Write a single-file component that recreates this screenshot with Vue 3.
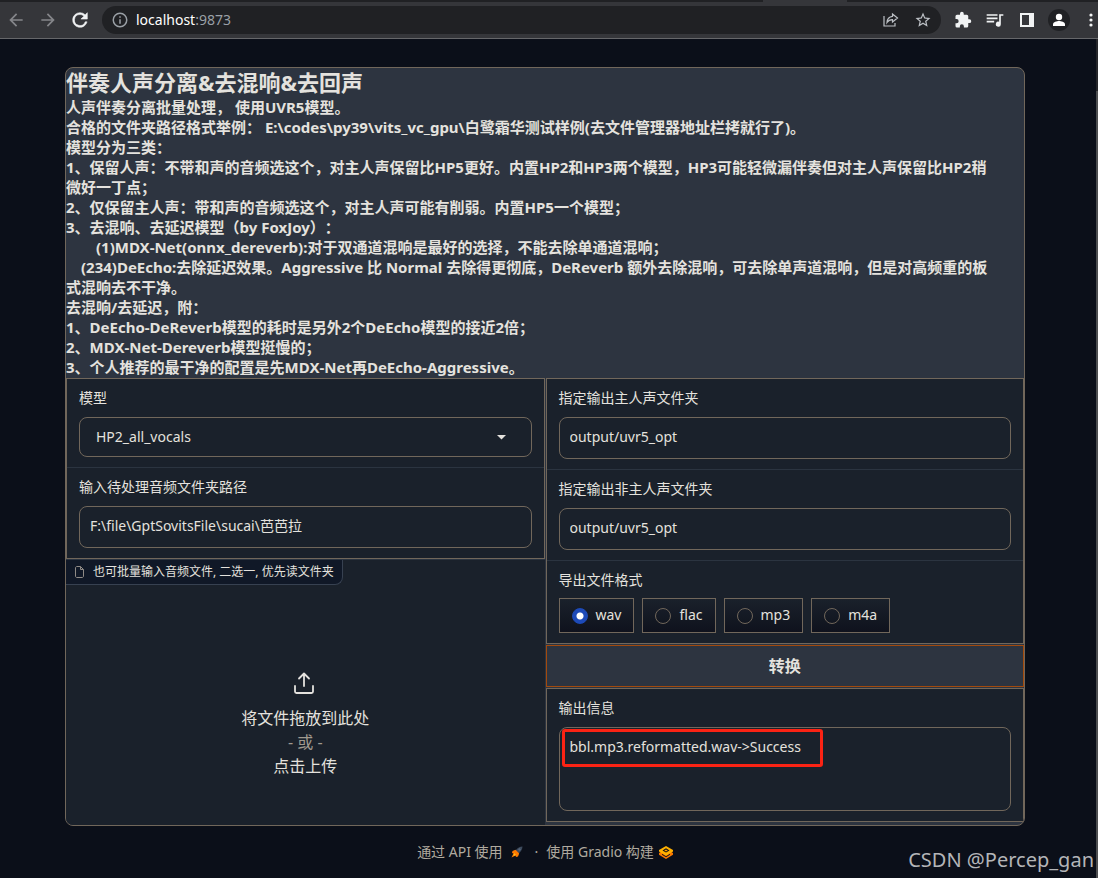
<script setup>
import { ref } from 'vue'

const model = ref('HP2_all_vocals')
const inputPath = ref('F:\\file\\GptSovitsFile\\sucai\\芭芭拉')
const vocalDir = ref('output/uvr5_opt')
const otherDir = ref('output/uvr5_opt')
const formats = ['wav', 'flac', 'mp3', 'm4a']
const format = ref('wav')
const result = ref('bbl.mp3.reformatted.wav->Success')
const address = ref('localhost:9873')
</script>

<template>
  <div class="window">
    <header class="chrome">
      <div class="tabs"><span class="tab"></span></div>
      <div class="toolbar">
        <button class="tool dim" aria-label="后退">
          <svg width="20" height="20" viewBox="0 0 24 24"><path fill="currentColor" d="M20 11H7.83l5.59-5.59L12 4l-8 8 8 8 1.41-1.41L7.83 13H20z" /></svg>
        </button>
        <button class="tool dim" aria-label="前进">
          <svg width="20" height="20" viewBox="0 0 24 24"><path fill="currentColor" d="M12 4l-1.41 1.41L16.17 11H4v2h12.17l-5.58 5.59L12 20l8-8z" /></svg>
        </button>
        <button class="tool" aria-label="重新加载">
          <svg width="22" height="22" viewBox="0 0 24 24"><path fill="currentColor" stroke="currentColor" stroke-width="0.6" d="M17.65 6.35A7.96 7.96 0 0 0 12 4a8 8 0 1 0 7.73 10h-2.08A6 6 0 1 1 12 6c1.66 0 3.14.69 4.22 1.78L13 11h7V4z" /></svg>
        </button>
        <div class="omnibox">
          <svg class="info" width="18" height="18" viewBox="0 0 24 24"><path fill="currentColor" d="M11 7h2v2h-2zm0 4h2v6h-2zm1-9a10 10 0 1 0 0 20 10 10 0 0 0 0-20m0 18a8 8 0 1 1 0-16 8 8 0 0 1 0 16" /></svg>
          <span class="url"><b>{{ address.split(':')[0] }}</b>:{{ address.split(':')[1] }}</span>
          <button class="tool soft" aria-label="分享">
            <svg width="16" height="16" viewBox="0 0 16 16" fill="none" stroke="currentColor" stroke-width="1.2"><path d="M1 4v10h11v-3M9.500 2l5 4-5 4V7.600C7 7.600 5.300 8.500 4 10.500 4.200 7 6 4.700 9.500 4.300z" /></svg>
          </button>
          <button class="tool soft" aria-label="收藏">
            <svg width="18" height="18" viewBox="0 0 24 24"><path fill="currentColor" d="m22 9.240-7.190-.62L12 2 9.190 8.630 2 9.240l5.460 4.730L5.820 21 12 17.270 18.180 21l-1.630-7.030zM12 15.400l-3.760 2.270 1-4.280-3.320-2.880 4.380-.38L12 6.100l1.710 4.040 4.380.38-3.320 2.880 1 4.280z" /></svg>
          </button>
        </div>
        <button class="tool" aria-label="扩展程序">
          <svg width="18" height="18" viewBox="0 0 24 24"><path fill="currentColor" d="M20.500 11H19V7a2 2 0 0 0-2-2h-4V3.500a2.500 2.500 0 0 0-5 0V5H4a2 2 0 0 0-2 2v3.800h1.500a2.700 2.700 0 0 1 0 5.400H2V20a2 2 0 0 0 2 2h3.800v-1.500a2.700 2.700 0 0 1 5.400 0V22H17a2 2 0 0 0 2-2v-4h1.500a2.500 2.500 0 0 0 0-5" /></svg>
        </button>
        <button class="tool" aria-label="媒体控制">
          <svg width="20" height="20" viewBox="0 0 24 24"><path fill="currentColor" d="M15 5H2v2h13zm0 4H2v2h13zM2 15h9v-2H2zM17 5v9.180A3 3 0 1 0 19 17V7h3V5z" /></svg>
        </button>
        <button class="tool" aria-label="侧边栏">
          <svg width="14" height="14" viewBox="0 0 14 14"><path fill="currentColor" fill-rule="evenodd" d="M0 0h14v14H0zM2 2v10h7V2z" /></svg>
        </button>
        <button class="tool" aria-label="用户">
          <svg width="22" height="22" viewBox="0 0 22 22"><circle cx="11" cy="11" r="11" fill="#202124" /><circle cx="11" cy="8" r="3.200" fill="#fff" /><path fill="#fff" d="M5 17v-1.800c0-2.200 4-3.200 6-3.200s6 1 6 3.200V17z" /></svg>
        </button>
        <button class="tool more" aria-label="菜单">
          <svg width="4" height="14" viewBox="0 0 4 14" fill="currentColor"><circle cx="2" cy="2" r="1.600" /><circle cx="2" cy="7" r="1.600" /><circle cx="2" cy="12" r="1.600" /></svg>
        </button>
      </div>
    </header>

    <div class="page">
      <main class="panel">
        <section class="intro">
          <h1>伴奏人声分离&amp;去混响&amp;去回声</h1>
          <p>
            人声伴奏分离批量处理， 使用UVR5模型。<br>
            合格的文件夹路径格式举例： E:\codes\py39\vits_vc_gpu\白鹭霜华测试样例(去文件管理器地址栏拷就行了)。<br>
            模型分为三类：<br>
            1、保留人声：不带和声的音频选这个，对主人声保留比HP5更好。内置HP2和HP3两个模型，HP3可能轻微漏伴奏但对主人声保留比HP2稍<br>
            微好一丁点；<br>
            2、仅保留主人声：带和声的音频选这个，对主人声可能有削弱。内置HP5一个模型；<br>
            3、去混响、去延迟模型（by FoxJoy）：<br>
            &emsp;&emsp;(1)MDX-Net(onnx_dereverb):对于双通道混响是最好的选择，不能去除单通道混响；<br>
            &emsp;(234)DeEcho:去除延迟效果。Aggressive 比 Normal 去除得更彻底，DeReverb 额外去除混响，可去除单声道混响，但是对高频重的板<br>
            式混响去不干净。<br>
            去混响/去延迟，附：<br>
            1、DeEcho-DeReverb模型的耗时是另外2个DeEcho模型的接近2倍；<br>
            2、MDX-Net-Dereverb模型挺慢的；<br>
            3、个人推荐的最干净的配置是先MDX-Net再DeEcho-Aggressive。
          </p>
        </section>

        <div class="columns">
          <div class="column left">
            <div class="form">
              <div class="block">
                <label for="model">模型</label>
                <div class="dropdown">
                  <select id="model" v-model="model">
                    <option>HP2_all_vocals</option>
                  </select>
                  <svg class="caret" width="9" height="5" viewBox="0 0 9 5"><path fill="currentColor" d="M0 0h9L4.500 4.500z" /></svg>
                </div>
              </div>
              <div class="block">
                <label for="input-path">输入待处理音频文件夹路径</label>
                <input id="input-path" v-model="inputPath" class="field" type="text">
              </div>
            </div>
            <div class="upload">
              <div class="upload-tag">
                <svg width="11" height="12" viewBox="0 0 11 12" fill="none" stroke="currentColor" stroke-linejoin="round"><path d="M1.500 2c0-.8.500-1.500 1.300-1.500H6.500l3 3V10c0 .9-.5 1.500-1.300 1.500H2.800c-.8 0-1.300-.6-1.300-1.500zM6.500.5v3h3" /></svg>
                也可批量输入音频文件, 二选一, 优先读文件夹
              </div>
              <button class="drop">
                <svg width="22" height="24" viewBox="0 0 22 24" fill="none" stroke="currentColor" stroke-width="1.800" stroke-linecap="round" stroke-linejoin="round"><path d="M1 15v5.500c0 .9.600 1.500 1.500 1.500h15c.9 0 1.500-.6 1.500-1.500V15M10 15V2.500M5 7.500l5-5 5 5" /></svg>
                <span>将文件拖放到此处</span>
                <span class="or">- 或 -</span>
                <span>点击上传</span>
              </button>
            </div>
          </div>

          <div class="column right">
            <div class="form">
              <div class="block">
                <label for="vocal-dir">指定输出主人声文件夹</label>
                <input id="vocal-dir" v-model="vocalDir" class="field" type="text">
              </div>
              <div class="block">
                <label for="other-dir">指定输出非主人声文件夹</label>
                <input id="other-dir" v-model="otherDir" class="field" type="text">
              </div>
              <fieldset class="block">
                <legend>导出文件格式</legend>
                <div class="radios">
                  <label v-for="f in formats" :key="f" class="radio">
                    <input v-model="format" type="radio" name="format" :value="f">
                    <span>{{ f }}</span>
                  </label>
                </div>
              </fieldset>
            </div>
            <button class="convert">转换</button>
            <div class="form">
              <div class="block">
                <label for="result">输出信息</label>
                <div class="result">
                  <textarea id="result" v-model="result" class="field"></textarea>
                  <span class="mark"></span>
                </div>
              </div>
            </div>
          </div>
        </div>
      </main>

      <footer class="footer">
        <a href="#api">通过 API 使用
          <svg class="rocket" width="12" height="12" viewBox="0 0 12 12"><path fill="#3d4a5c" d="M11.500.5C9 .5 6.500 2 4.500 4.500l3 3C10 5.500 11.500 3 11.500.5" /><path fill="#55647a" d="M7 3.500 8.500 5 10 3.500 8.500 2z" /><path fill="#ff7a00" d="M4.500 3.800 1.500 5l-.5 2 1.500.500L.5 11.500l4-2L5 11l2-.500 1.200-3z" /><path fill="#ffc21a" d="M3 7l2 2-2.500 1z" /></svg>
        </a>
        <span class="sep">·</span>
        <a href="#gradio">使用 Gradio 构建
          <svg class="logo" width="14" height="13" viewBox="0 0 14 13"><path fill="#f97700" d="M7 2.800 14 7v1.800L7 13 0 8.800V7z" /><path fill="#ffb000" d="M7 0l7 4v1.500L7 9.700 0 5.500V4z" /><path fill="#0b0f19" d="M7 2.300 10.500 4.500 7 6.600 3.500 4.500zM3 7.800l4 2.400 4-2.400v1L7 11.200 3 8.800z" /><path fill="#ff9d00" d="M7 3.500 8.800 4.500 7 5.600 5.200 4.500z" /></svg>
        </a>
      </footer>
      <div class="scrollbar"></div>
    </div>
    <div class="watermark">CSDN @Percep_gan</div>
  </div>
</template>

<style>
html,
body {
  background: #0b0f19;
}
</style>

<style scoped>
.window {
  --line: #71675b;
  --fill: #1a212b;
  --raised: #2d3440;
  --text: #e4e2de;
  position: relative;
  min-height: 100vh;
  display: flex;
  flex-direction: column;
  overflow: hidden;
  color: var(--text);
  font-family: "Noto Sans", "Noto Sans CJK SC", sans-serif;
  font-size: 14px;
  line-height: 20px;
}
.window * {
  box-sizing: border-box;
}
button,
input,
select,
textarea {
  margin: 0;
  border: 0;
  padding: 0;
  background: none;
  color: inherit;
  font: inherit;
  outline: none;
}

/* browser chrome */
.chrome {
  background: #35363a;
  border-bottom: 1px solid #66676a;
}
.tabs {
  height: 2px;
  display: flex;
  justify-content: flex-end;
  background: #202124;
}
.tab {
  width: 84px;
  margin-right: 251px;
  background: #35363a;
}
.toolbar {
  height: 36px;
  display: flex;
  align-items: center;
}
.tool {
  flex: none;
  width: 32px;
  height: 28px;
  display: flex;
  align-items: center;
  justify-content: center;
  color: #f1f3f4;
}
.dim {
  color: #85868a;
}
.soft {
  color: #bdc1c6;
}
.more {
  width: 23px;
  padding-left: 8px;
}
.omnibox {
  flex: 1;
  min-width: 0;
  height: 28px;
  margin: 0 6px;
  padding: 0 2px 0 9px;
  display: flex;
  align-items: center;
  border-radius: 14px;
  background: #202124;
}
.info {
  color: #9aa0a6;
}
.url {
  flex: 1;
  margin-left: 7px;
  color: #9aa0a6;
}
.url b {
  color: #fff;
  font-weight: 400;
}

/* page */
.page {
  position: relative;
  flex: 1;
  padding: 28px 73px 0 65px;
  background: #0b0f19;
}
.panel {
  overflow: hidden;
  border: 1px solid var(--line);
  border-radius: 8px;
  background: var(--raised);
}
.intro {
  padding-bottom: 1px;
  white-space: nowrap;
  font-weight: 700;
  text-spacing-trim: space-all;
}
.intro h1 {
  margin: 0 0 1px;
  font-size: 22px;
  line-height: 28px;
}
.intro p {
  margin: 0;
  font-size: 15px;
  line-height: 20px;
}
.columns {
  display: grid;
  grid-template-columns: 1fr 1fr;
  column-gap: 1px;
}
.column {
  min-width: 0;
  display: flex;
  flex-direction: column;
}
.right {
  gap: 1px;
  padding-bottom: 3px;
}
.form {
  border: 1px solid var(--line);
  background: var(--fill);
}
.block {
  margin: 0;
  border: 0;
  padding: 10px 12px;
  min-width: 0;
}
.block + .block {
  border-top: 1px solid #2b3440;
}
.block > label,
legend {
  display: block;
  margin-bottom: 10px;
  padding: 0;
  line-height: 18px;
}
legend {
  float: left;
  width: 100%;
  margin-bottom: 9px;
}
.field {
  display: block;
  width: 100%;
  height: 42px;
  padding: 0 10px 4px;
  border: 1px solid var(--line);
  border-radius: 8px;
}
textarea.field {
  height: 84px;
  padding: 9px 10px;
  resize: none;
}
.dropdown {
  position: relative;
}
select {
  display: block;
  width: 100%;
  height: 40px;
  padding: 0 40px 0 16px;
  border: 1px solid var(--line);
  border-radius: 8px;
  appearance: none;
}
.caret {
  position: absolute;
  right: 26px;
  top: 18px;
}
.radios {
  clear: both;
  display: flex;
  gap: 8px;
}
.radio {
  height: 35px;
  display: flex;
  align-items: center;
  gap: 8px;
  padding: 0 12px;
  border: 1px solid var(--line);
  background: linear-gradient(#1a212b, #0f121d);
}
.radio span {
  padding-bottom: 2px;
}
.radio input {
  appearance: none;
  width: 16px;
  height: 16px;
  border: 1px solid var(--line);
  border-radius: 50%;
}
.radio input:checked {
  border-color: #1d4ab8;
  background: radial-gradient(circle, #fff 3px, #1d4ab8 4px);
}
.convert {
  height: 42px;
  border: 1px solid #a34a0c;
  background: var(--raised);
  font-size: 16px;
  font-weight: 700;
}
.result {
  position: relative;
}
.mark {
  position: absolute;
  left: 3px;
  top: 2px;
  width: 261px;
  height: 38px;
  border: 3px solid #fb2314;
  border-radius: 3px;
}
.upload {
  flex: 1;
  display: flex;
  flex-direction: column;
  align-items: flex-start;
  border-top: 1px solid #2b3440;
  background: var(--fill);
}
.upload-tag {
  display: flex;
  align-items: center;
  gap: 8px;
  height: 25px;
  padding: 0 8px;
  border: solid #374151;
  border-width: 0 1px 1px 0;
  border-radius: 0 0 8px 0;
  background: #101827;
  font-size: 12px;
}
.upload-tag svg {
  color: #8f8a86;
}
.drop {
  flex: 1;
  width: 100%;
  display: flex;
  flex-direction: column;
  align-items: center;
  justify-content: center;
  padding-top: 38px;
  font-size: 16px;
  line-height: 24px;
}
.drop svg {
  margin-bottom: 11px;
}
.or {
  color: #a09a90;
}
.footer {
  display: flex;
  justify-content: center;
  align-items: center;
  margin-top: 16px;
  color: #b0aa9f;
}
.footer a {
  display: flex;
  align-items: center;
  color: inherit;
  text-decoration: none;
}
.rocket {
  margin-left: 8px;
}
.sep {
  margin: 0 8px 0 12px;
}
.logo {
  margin-left: 5px;
}
.scrollbar {
  position: absolute;
  top: 0;
  right: 0;
  bottom: 0;
  width: 2px;
  background: linear-gradient(#25262a 52px, #4d4e50 52px);
}
.watermark {
  position: absolute;
  right: 4px;
  bottom: 6px;
  color: #b4b5b8;
  font-family: "Noto Sans", sans-serif;
  font-size: 20px;
  line-height: 24px;
}
</style>
